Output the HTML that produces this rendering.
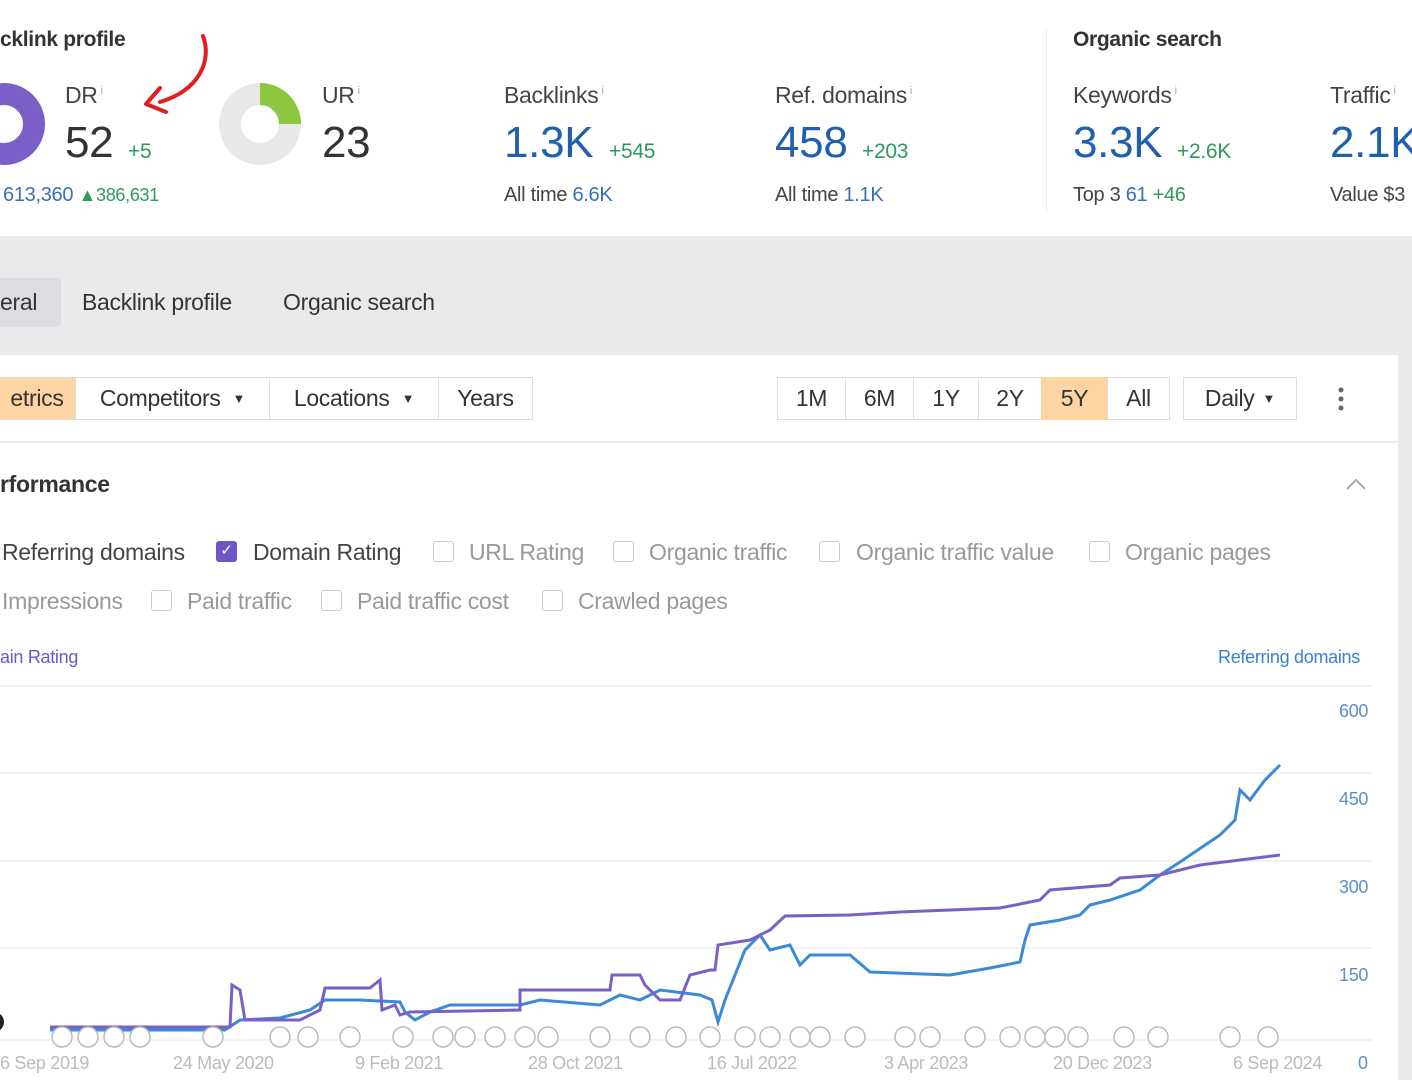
<!DOCTYPE html>
<html><head><meta charset="utf-8"><style>
*{margin:0;padding:0;box-sizing:border-box}
body{width:1412px;height:1080px;overflow:hidden;background:#e9eaec;font-family:"Liberation Sans",sans-serif;position:relative;color:#333;letter-spacing:-0.3px}
.a{position:absolute;white-space:nowrap}
.top{position:absolute;left:0;top:0;width:1412px;height:236px;background:#fff}
.lbl{font-size:23px;color:#444}
.lbl sup{font-size:11px;color:#aaa;margin-left:3px}
.big{font-size:44px}
.blue{color:#1f5fae}
.grn{color:#2e9a5a;font-size:21px}
.sub{font-size:20px;color:#444}
.card{position:absolute;left:0;top:355px;width:1398px;height:725px;background:#fff}
.btn{position:absolute;top:377px;height:43px;border:1px solid #ddd;background:#fff;font-size:23px;color:#333;display:flex;align-items:center;justify-content:center}
.cb{position:absolute;width:21px;height:21px;border:1.5px solid #ccc;border-radius:3px}
.ct{position:absolute;font-size:23px;color:#999;white-space:nowrap}
.ax{position:absolute;font-size:18px;color:#5a8fd0}
.dl{position:absolute;font-size:18px;color:#bbb;top:1053px;white-space:nowrap}
</style></head><body>
<div class="top"></div>
<div class="a" style="left:0;top:28px;font-size:21px;font-weight:bold;color:#333">cklink profile</div>
<div class="a" style="left:1073px;top:28px;font-size:21px;font-weight:bold;color:#333">Organic search</div>
<div class="a" style="left:1046px;top:28px;width:1px;height:185px;background:#eee"></div>
<svg class="a" style="left:0;top:0" width="1412" height="236">
<circle cx="4" cy="124" r="30" fill="none" stroke="#7b5fc8" stroke-width="22"/>
<circle cx="260" cy="124" r="30" fill="none" stroke="#e8e8e8" stroke-width="22"/>
<path d="M260 94 A30 30 0 0 1 290 124" fill="none" stroke="#8dc63f" stroke-width="22"/>
<path d="M203 36 C212 60 200 90 160 102" fill="none" stroke="#e02020" stroke-width="4" stroke-linecap="round"/>
<path d="M160 88 L146 104 L166 112" fill="none" stroke="#e02020" stroke-width="4" stroke-linecap="round" stroke-linejoin="round"/>
</svg>
<div class="a lbl" style="left:65px;top:82px">DR<sup>i</sup></div>
<div class="a big" style="left:65px;top:118px;color:#333">52</div>
<div class="a grn" style="left:128px;top:140px">+5</div>
<div class="a sub" style="left:3px;top:184px"><span style="color:#3a6fb5">613,360</span> <span style="color:#2e9a5a;font-size:18px">▲386,631</span></div>
<div class="a lbl" style="left:322px;top:82px">UR<sup>i</sup></div>
<div class="a big" style="left:322px;top:118px;color:#333">23</div>
<div class="a lbl" style="left:504px;top:82px">Backlinks<sup>i</sup></div>
<div class="a big blue" style="left:504px;top:118px">1.3K</div>
<div class="a grn" style="left:609px;top:140px">+545</div>
<div class="a sub" style="left:504px;top:184px">All time <span style="color:#3a6fb5">6.6K</span></div>
<div class="a lbl" style="left:775px;top:82px">Ref. domains<sup>i</sup></div>
<div class="a big blue" style="left:775px;top:118px">458</div>
<div class="a grn" style="left:862px;top:140px">+203</div>
<div class="a sub" style="left:775px;top:184px">All time <span style="color:#3a6fb5">1.1K</span></div>
<div class="a lbl" style="left:1073px;top:82px">Keywords<sup>i</sup></div>
<div class="a big blue" style="left:1073px;top:118px">3.3K</div>
<div class="a grn" style="left:1177px;top:140px">+2.6K</div>
<div class="a sub" style="left:1073px;top:184px">Top 3 <span style="color:#3a6fb5">61</span> <span style="color:#2e9a5a">+46</span></div>
<div class="a lbl" style="left:1330px;top:82px">Traffic<sup>i</sup></div>
<div class="a big blue" style="left:1330px;top:118px">2.1K</div>
<div class="a sub" style="left:1330px;top:184px">Value $3</div>

<div class="a" style="left:0;top:278px;width:61px;height:49px;background:#dcdde0;border-radius:0 4px 4px 0"></div>
<div class="a" style="left:0;top:289px;font-size:23px;color:#333">eral</div>
<div class="a" style="left:82px;top:289px;font-size:23px;color:#333">Backlink profile</div>
<div class="a" style="left:283px;top:289px;font-size:23px;color:#333">Organic search</div>

<div class="card"></div>
<div class="btn" style="left:-2px;width:78px;background:#fdd5a3">etrics</div>
<div class="btn" style="left:75px;width:195px">Competitors <span style="font-size:13px;margin-left:12px">▼</span></div>
<div class="btn" style="left:269px;width:170px">Locations <span style="font-size:13px;margin-left:12px">▼</span></div>
<div class="btn" style="left:438px;width:95px">Years</div>
<div class="btn" style="left:777px;width:69px">1M</div>
<div class="btn" style="left:845px;width:69px">6M</div>
<div class="btn" style="left:913px;width:66px">1Y</div>
<div class="btn" style="left:978px;width:64px">2Y</div>
<div class="btn" style="left:1041px;width:67px;background:#fdd5a3;border-color:#fdd5a3">5Y</div>
<div class="btn" style="left:1107px;width:63px">All</div>
<div class="btn" style="left:1183px;width:114px">Daily <span style="font-size:13px;margin-left:8px">▼</span></div>
<svg class="a" style="left:1334px;top:386px" width="14" height="26"><circle cx="7" cy="4" r="2.5" fill="#666"/><circle cx="7" cy="13" r="2.5" fill="#666"/><circle cx="7" cy="22" r="2.5" fill="#666"/></svg>
<div class="a" style="left:0;top:441px;width:1398px;height:2px;background:#eee"></div>
<div class="a" style="left:0;top:471px;font-size:23px;font-weight:bold;color:#333">rformance</div>
<svg class="a" style="left:1345px;top:477px" width="22" height="14"><path d="M2 12 L11 3 L20 12" fill="none" stroke="#aaa" stroke-width="2"/></svg>

<div class="ct" style="left:2px;top:539px;color:#444">Referring domains</div>
<div class="cb" style="left:216px;top:541px;background:#6e56c6;border-color:#6e56c6;color:#fff;font-size:15px;line-height:18px;text-align:center">✓</div>
<div class="ct" style="left:253px;top:539px;color:#444">Domain Rating</div>
<div class="cb" style="left:433px;top:541px"></div><div class="ct" style="left:469px;top:539px">URL Rating</div>
<div class="cb" style="left:613px;top:541px"></div><div class="ct" style="left:649px;top:539px">Organic traffic</div>
<div class="cb" style="left:819px;top:541px"></div><div class="ct" style="left:856px;top:539px">Organic traffic value</div>
<div class="cb" style="left:1089px;top:541px"></div><div class="ct" style="left:1125px;top:539px">Organic pages</div>
<div class="ct" style="left:2px;top:588px">Impressions</div>
<div class="cb" style="left:151px;top:590px"></div><div class="ct" style="left:187px;top:588px">Paid traffic</div>
<div class="cb" style="left:321px;top:590px"></div><div class="ct" style="left:357px;top:588px">Paid traffic cost</div>
<div class="cb" style="left:542px;top:590px"></div><div class="ct" style="left:578px;top:588px">Crawled pages</div>

<div class="a" style="left:0;top:647px;font-size:18px;color:#6e56c6">ain Rating</div>
<div class="a" style="left:1218px;top:647px;font-size:18px;color:#3a7fd0">Referring domains</div>
<div class="ax" style="left:1339px;top:701px">600</div>
<div class="ax" style="left:1339px;top:789px">450</div>
<div class="ax" style="left:1339px;top:877px">300</div>
<div class="ax" style="left:1339px;top:965px">150</div>
<div class="ax" style="left:1358px;top:1053px">0</div>
<svg class="a" style="left:0;top:0" width="1412" height="1080">
<g stroke="#eee" stroke-width="1.5"><line x1="0" y1="686" x2="1372" y2="686"/><line x1="0" y1="773" x2="1372" y2="773"/><line x1="0" y1="861" x2="1372" y2="861"/><line x1="0" y1="948" x2="1372" y2="948"/><line x1="0" y1="1040" x2="1372" y2="1040"/></g>
<polyline fill="none" stroke="#3a8ad8" stroke-width="3" points="50,1030 225,1030 240,1020 280,1018 310,1010 325,1000 360,1000 400,1002 405,1012 415,1020 430,1012 450,1005 520,1005 540,1000 600,1005 620,995 640,1000 660,990 700,995 712,1000 718,1022 725,1000 735,975 745,950 760,935 770,950 790,945 800,965 810,955 850,955 870,972 950,975 990,968 1020,962 1025,940 1030,925 1060,920 1080,915 1090,905 1110,900 1140,890 1160,875 1180,862 1220,835 1235,820 1240,790 1250,800 1265,780 1280,765"/>
<polyline fill="none" stroke="#7b5fc8" stroke-width="3" points="50,1027 230,1027 232,985 240,990 245,1020 300,1020 320,1010 325,988 370,988 375,984 380,980 382,1010 395,1005 400,1015 410,1012 520,1010 520,990 610,990 612,975 640,975 645,985 660,1000 680,1000 690,975 710,970 715,970 718,945 750,940 770,930 785,916 850,915 900,912 1000,908 1040,900 1050,890 1110,885 1120,878 1160,875 1200,865 1280,855"/>
<g fill="#fff" stroke="#bbb" stroke-width="1.5">
<circle cx="62" cy="1037" r="10"/><circle cx="88" cy="1037" r="10"/><circle cx="114" cy="1037" r="10"/><circle cx="140" cy="1037" r="10"/><circle cx="213" cy="1037" r="10"/><circle cx="280" cy="1037" r="10"/><circle cx="308" cy="1037" r="10"/><circle cx="350" cy="1037" r="10"/><circle cx="403" cy="1037" r="10"/><circle cx="443" cy="1037" r="10"/><circle cx="465" cy="1037" r="10"/><circle cx="495" cy="1037" r="10"/><circle cx="525" cy="1037" r="10"/><circle cx="548" cy="1037" r="10"/><circle cx="600" cy="1037" r="10"/><circle cx="640" cy="1037" r="10"/><circle cx="676" cy="1037" r="10"/><circle cx="710" cy="1037" r="10"/><circle cx="745" cy="1037" r="10"/><circle cx="770" cy="1037" r="10"/><circle cx="800" cy="1037" r="10"/><circle cx="820" cy="1037" r="10"/><circle cx="855" cy="1037" r="10"/><circle cx="905" cy="1037" r="10"/><circle cx="930" cy="1037" r="10"/><circle cx="975" cy="1037" r="10"/><circle cx="1010" cy="1037" r="10"/><circle cx="1035" cy="1037" r="10"/><circle cx="1055" cy="1037" r="10"/><circle cx="1078" cy="1037" r="10"/><circle cx="1124" cy="1037" r="10"/><circle cx="1158" cy="1037" r="10"/><circle cx="1230" cy="1037" r="10"/><circle cx="1268" cy="1037" r="10"/>
</g>
<circle cx="-6" cy="1022" r="10" fill="#222"/>
</svg>
<div class="dl" style="left:0">6 Sep 2019</div>
<div class="dl" style="left:173px">24 May 2020</div>
<div class="dl" style="left:355px">9 Feb 2021</div>
<div class="dl" style="left:528px">28 Oct 2021</div>
<div class="dl" style="left:707px">16 Jul 2022</div>
<div class="dl" style="left:884px">3 Apr 2023</div>
<div class="dl" style="left:1053px">20 Dec 2023</div>
<div class="dl" style="left:1233px">6 Sep 2024</div>
</body></html>
